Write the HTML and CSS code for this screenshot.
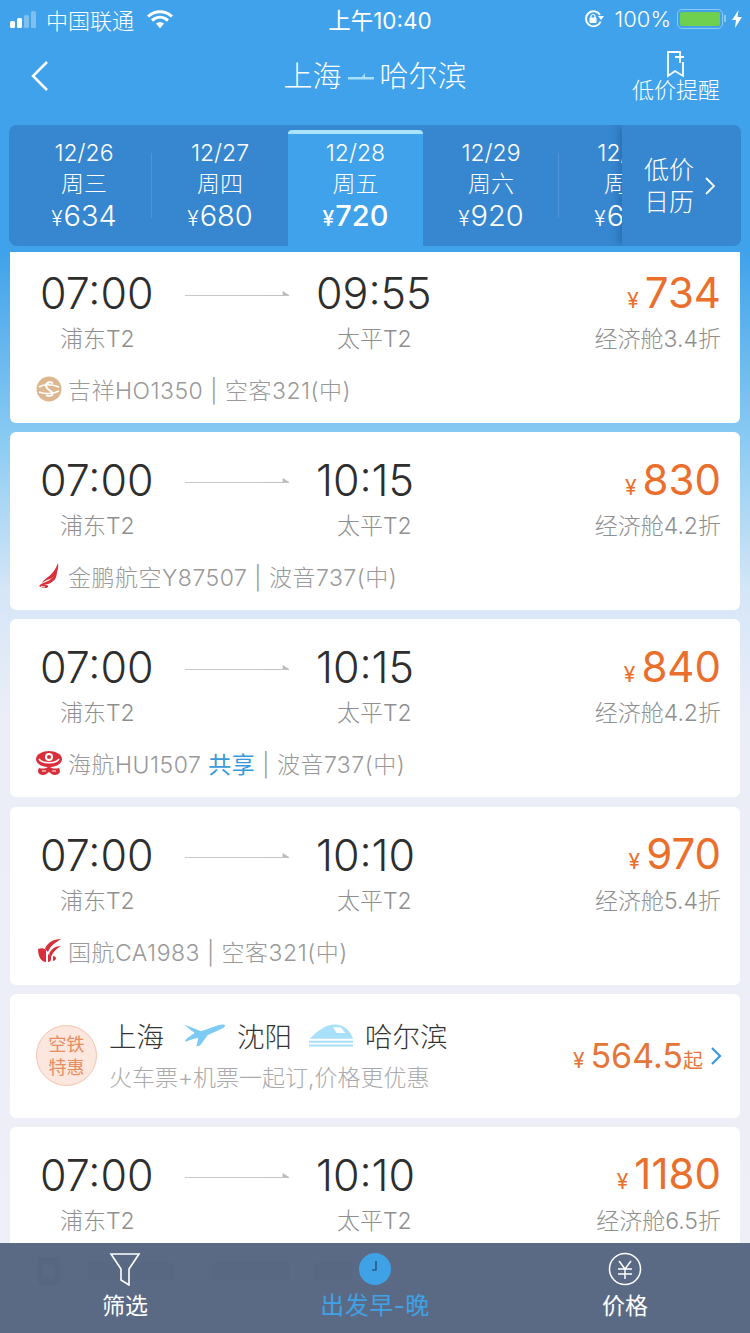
FILE: index.html
```html
<!DOCTYPE html>
<html lang="zh">
<head>
<meta charset="utf-8">
<title>上海-哈尔滨</title>
<link rel="stylesheet" href="styles.css">
</head>
<body>
<div class="page">
  <div class="status">
    <div class="st-left">
      <svg class="signal" width="30" height="18" viewBox="0 0 30 18"><rect x="0" y="11" width="5" height="7" rx="1.5" fill="#fff"/><rect x="7" y="8" width="5" height="10" rx="1.5" fill="#fff"/><rect x="14" y="5" width="5" height="13" rx="1.5" fill="#7fc0f0"/><rect x="21" y="1" width="5" height="17" rx="1.5" fill="#7fc0f0"/></svg>
      <span>中国联通</span>
      <svg class="wifi" width="28" height="20" viewBox="0 0 28 20"><path d="M2 7.5C9 1 19 1 26 7.5M6 11.5c5-4.3 11-4.300 16 0" fill="none" stroke="#fff" stroke-width="3"/><path d="M10 14.500c2.500-2 5.500-2 8 0L14 19.500z" fill="#fff"/></svg>
    </div>
    <div class="st-time">上午10:40</div>
    <div class="st-right">
      <svg width="22" height="20" viewBox="0 0 22 20"><path d="M17.500 12.500A7.500 7.500 0 1 1 17 6" fill="none" stroke="#fff" stroke-width="1.800"/><path d="M15 7h6l-3 4z" fill="#fff"/><rect x="6.500" y="8.500" width="7" height="5.500" rx="1" fill="#fff"/><path d="M8 9V7.500a2 2 0 0 1 4 0V9" fill="none" stroke="#fff" stroke-width="1.200"/></svg>
      <span>100%</span>
      <div class="battery"><div class="battery-fill"></div></div>
      <div class="battery-tip"></div>
      <svg width="10" height="18" viewBox="0 0 10 18"><path d="M6.500 0 0 10h4l-1 8 7-11H5.500z" fill="#fff"/></svg>
    </div>
  </div>

  <div class="nav">
    <svg class="back" width="20" height="32" viewBox="0 0 20 32"><path d="M17 2 3 16l14 14" fill="none" stroke="#fff" stroke-width="2.500"/></svg>
    <div class="title">
      <span>上海</span>
      <svg width="26" height="10" viewBox="0 0 26 10"><path d="M0 6h26v2.500H0zM14 6l3-4v4z" fill="#a9e0fa"/></svg>
      <span>哈尔滨</span>
    </div>
    <div class="remind">
      <svg width="20" height="28" viewBox="0 0 20 28"><path d="M14 2H2v24l7-5 8 5V12" fill="none" stroke="#fff" stroke-width="1.800"/><path d="M14 1v12M9 7h9" fill="none" stroke="#fff" stroke-width="1.800"/></svg>
      <span>低价提醒</span>
    </div>
  </div>

  <div class="dates">
    <div class="date-scroll">
      <div class="date div"><span>12/26</span><span>周三</span><span class="dprice"><small>¥</small>634</span></div>
      <div class="date"><span>12/27</span><span>周四</span><span class="dprice"><small>¥</small>680</span></div>
      <div class="date on"><span>12/28</span><span>周五</span><span class="dprice"><small>¥</small>720</span></div>
      <div class="date div"><span>12/29</span><span>周六</span><span class="dprice"><small>¥</small>920</span></div>
      <div class="date"><span>12/30</span><span>周日</span><span class="dprice"><small>¥</small>680</span></div>
    </div>
    <div class="calendar">
      <div class="cal-text"><span>低价</span><span>日历</span></div>
      <svg width="12" height="20" viewBox="0 0 12 20"><path d="M2 2l8 8-8 8" fill="none" stroke="#fff" stroke-width="1.800"/></svg>
    </div>
  </div>

  <div class="list">
    <div class="card first">
      <div class="row-times">
        <span class="time">07:00</span>
        <svg class="arrow" width="104" height="8" viewBox="0 0 104 8"><path d="M0 4.500h104l-6-4v3.500" fill="#bbb" stroke="#bbb" stroke-width=".8"/></svg>
        <span class="time arr">09:55</span>
        <span class="price"><small>¥</small>734</span>
      </div>
      <div class="row-sub">
        <span class="term dep">浦东T2</span>
        <span class="term to">太平T2</span>
        <span class="disc">经济舱3.4折</span>
      </div>
      <div class="row-air">
        <svg class="logo" width="26" height="26" viewBox="0 0 26 26"><circle cx="13" cy="13" r="12.500" fill="#dcb78f"/><path d="M3 11c5-3 12-3 20 0M3 16c6 2 14 2 20-1" fill="none" stroke="#fff" stroke-width="1.500"/><path d="M17 7c-5-2-9 1-6 5s7 3 5 7c-1 1-4 1-6 0" fill="none" stroke="#fff" stroke-width="2"/></svg>
        <span>吉祥HO1350 | 空客321(中)</span>
      </div>
    </div>

    <div class="card">
      <div class="row-times">
        <span class="time">07:00</span>
        <svg class="arrow" width="104" height="8" viewBox="0 0 104 8"><path d="M0 4.500h104l-6-4v3.500" fill="#bbb" stroke="#bbb" stroke-width=".8"/></svg>
        <span class="time arr">10:15</span>
        <span class="price"><small>¥</small>830</span>
      </div>
      <div class="row-sub">
        <span class="term dep">浦东T2</span>
        <span class="term to">太平T2</span>
        <span class="disc">经济舱4.2折</span>
      </div>
      <div class="row-air">
        <svg class="logo" width="26" height="26" viewBox="0 0 26 26"><path d="M22 0c1 8-2 13-8 16-3 1-6 2-8 4 1-3 4-4 6-6 4-3 8-8 10-14z" fill="#d8303a"/><path d="M21 8c0 7-3 11-9 13l-4 1c2 0 5 0 4 2-2 2-6 1-9-1 1-2 4-3 7-4 5-2 8-6 11-11z" fill="#d8303a"/><path d="M5 23c1 .8 3 1.200 4 .8" fill="none" stroke="#fff" stroke-width="1"/></svg>
        <span>金鹏航空Y87507 | 波音737(中)</span>
      </div>
    </div>

    <div class="card">
      <div class="row-times">
        <span class="time">07:00</span>
        <svg class="arrow" width="104" height="8" viewBox="0 0 104 8"><path d="M0 4.500h104l-6-4v3.500" fill="#bbb" stroke="#bbb" stroke-width=".8"/></svg>
        <span class="time arr">10:15</span>
        <span class="price"><small>¥</small>840</span>
      </div>
      <div class="row-sub">
        <span class="term dep">浦东T2</span>
        <span class="term to">太平T2</span>
        <span class="disc">经济舱4.2折</span>
      </div>
      <div class="row-air">
        <svg class="logo" width="26" height="26" viewBox="0 0 26 26"><path d="M13 1c6 0 13 3 13 8 0 5-6 8-13 8S0 14 0 9c0-5 7-8 13-8z" fill="#d8303a"/><circle cx="13" cy="7" r="4" fill="#fff"/><circle cx="13" cy="7" r="2" fill="#d8303a"/><path d="M3 9c3 5 17 5 20 0" fill="none" stroke="#fff" stroke-width="1.500"/><path d="M13 16c-3 3-6 3-10 2-2 3-1 7 4 7 3 0 4-2 6-3 2 1 3 3 6 3 5 0 6-4 4-7-4 1-7 1-10-2z" fill="#d8303a"/><path d="M6 21h4M16 21h4" stroke="#fff" stroke-width="1.200"/></svg>
        <span>海航HU1507 <b class="share">共享</b> | 波音737(中)</span>
      </div>
    </div>

    <div class="card">
      <div class="row-times">
        <span class="time">07:00</span>
        <svg class="arrow" width="104" height="8" viewBox="0 0 104 8"><path d="M0 4.500h104l-6-4v3.500" fill="#bbb" stroke="#bbb" stroke-width=".8"/></svg>
        <span class="time arr">10:10</span>
        <span class="price"><small>¥</small>970</span>
      </div>
      <div class="row-sub">
        <span class="term dep">浦东T2</span>
        <span class="term to">太平T2</span>
        <span class="disc">经济舱5.4折</span>
      </div>
      <div class="row-air">
        <svg class="logo" width="26" height="26" viewBox="0 0 26 26"><path d="M2 11c3-1 6-1 8 1v12C5 24 2 18 2 11z" fill="#d8303a"/><path d="M25 1C17 1 11 5 9 11l3 3c2-6 7-9 13-13z" fill="#d8303a"/><path d="M25 8c-6 0-10 3-12 8l2 3c2-5 5-8 10-11z" fill="#d8303a"/><path d="M12 16v8c2 0 3-1 3-3v-3z" fill="#d8303a"/><path d="M17 18c2 0 3 1 3 3-1 1-2 2-3 2z" fill="#d8303a"/></svg>
        <span>国航CA1983 | 空客321(中)</span>
      </div>
    </div>

    <div class="card promo">
      <div class="badge"><span>空铁</span><span>特惠</span></div>
      <div class="promo-main">
        <div class="route">
          <span>上海</span>
          <svg class="plane" width="42" height="24" viewBox="0 0 44 24"><path d="M1 1l18 7 14-5c5-2 11-3 11-1s-4 4-9 6l-9 4-8 11-4 1 2-9-8 2-5 2-1-1 3-3 7-5z" fill="#7dcbf2"/></svg>
          <span>沈阳</span>
          <svg class="train" width="46" height="24" viewBox="0 0 48 24"><path d="M2 16C8 9 18 1 28 1c9 0 16 6 19 15z" fill="#a7e0f8"/><path d="M26 4h8l5 6-9 0z" fill="#fff"/><path d="M1 18h46v2H1zM1 22h46v2H1z" fill="#a7e0f8"/></svg>
          <span>哈尔滨</span>
        </div>
        <div class="promo-sub">火车票+机票一起订,价格更优惠</div>
      </div>
      <div class="promo-price"><small>¥</small>564.5<em>起</em></div>
      <svg class="promo-go" width="12" height="20" viewBox="0 0 12 20"><path d="M2 2l8 8-8 8" fill="none" stroke="#3a9ad9" stroke-width="2.200"/></svg>
    </div>

    <div class="card">
      <div class="row-times">
        <span class="time">07:00</span>
        <svg class="arrow" width="104" height="8" viewBox="0 0 104 8"><path d="M0 4.500h104l-6-4v3.500" fill="#bbb" stroke="#bbb" stroke-width=".8"/></svg>
        <span class="time arr">10:10</span>
        <span class="price"><small>¥</small>1180</span>
      </div>
      <div class="row-sub">
        <span class="term dep">浦东T2</span>
        <span class="term to">太平T2</span>
        <span class="disc">经济舱6.5折</span>
      </div>
      <div class="row-air">
        <svg class="logo" width="26" height="30" viewBox="0 0 26 30"><path d="M2 1h22v28H2zM7 9h12v12H7z" fill="#999" fill-rule="evenodd"/></svg>
        <div class="ghost g1"></div>
        <div class="ghost g2"></div>
        <div class="ghost g3"></div>
      </div>
    </div>
  </div>

  <div class="tabbar">
    <div class="tab">
      <svg width="32" height="34" viewBox="0 0 32 34"><path d="M2 2h28L20 17v16l-8-5V17z" fill="none" stroke="#fff" stroke-width="1.600"/></svg>
      <span>筛选</span>
    </div>
    <div class="tab active">
      <svg width="34" height="34" viewBox="0 0 34 34"><circle cx="17" cy="17" r="16" fill="#3fa2e6"/><path d="M18 9v9h-4" fill="none" stroke="#26405f" stroke-width="1.200"/></svg>
      <span>出发早-晚</span>
    </div>
    <div class="tab">
      <svg width="34" height="34" viewBox="0 0 34 34"><circle cx="17" cy="17" r="15.500" fill="none" stroke="#fff" stroke-width="1.500"/><path d="M11 9l6 8 6-8M10 17h14M10 22h14M17 17v10" fill="none" stroke="#fff" stroke-width="1.500"/></svg>
      <span>价格</span>
    </div>
  </div>
</div>
</body>
</html>
```
FILE: styles.css
```css
* { box-sizing: border-box; }
html, body { margin: 0; padding: 0; }
body { font-family: Inter, "Noto Sans CJK SC", sans-serif; }
.page {
  position: relative;
  width: 750px;
  height: 1333px;
  overflow: hidden;
  background: linear-gradient(180deg, #3fa2ea 0, #3fa2ea 250px, #8acbf3 440px, #d5e6f7 590px, #eceef7 720px, #eeeff7 100%);
  color: #fff;
}
.status {
  height: 37px;
  display: grid;
  grid-template-columns: 1fr auto 1fr;
  align-items: center;
  padding: 0 8px 0 10px;
  font-size: 22px;
  font-weight: 300;
}
.st-left { display: flex; align-items: center; gap: 6px; }
.st-left .wifi { margin-left: 6px; }
.st-time { font-weight: 400; font-size: 22.500px; margin-left: 8px; }
.st-right { display: flex; align-items: center; justify-content: flex-end; gap: 4px; }
.st-right span { margin: 0 2px 0 6px; }
.battery { width: 46px; height: 20px; border: 1.500px solid #8cc9f1; border-radius: 5px; padding: 2px; }
.battery-fill { height: 100%; background: #6fd04f; border-radius: 2px; }
.battery-tip { width: 2px; height: 7px; background: #8cc9f1; margin-left: -3px; margin-right: 2px; }

.nav {
  height: 88px;
  display: grid;
  grid-template-columns: 1fr auto 1fr;
  align-items: center;
  padding: 0 30px;
  position: relative;
}
.back { margin-top: -10px; }
.title { display: flex; align-items: center; gap: 6px; font-size: 29px; font-weight: 300; margin-top: -14px; }
.title svg { margin-top: 4px; }
.remind {
  justify-self: end;
  display: flex;
  flex-direction: column;
  align-items: center;
  font-size: 22px;
  font-weight: 300;
  line-height: 26px;
  margin-top: -10px;
}
.remind svg { margin-bottom: -1px; }

.dates {
  margin: 0 9px;
  height: 121px;
  background: #3786d0;
  border-radius: 8px;
  display: flex;
  overflow: hidden;
}
.date-scroll {
  flex: 1;
  min-width: 0;
  display: flex;
  padding-left: 7px;
  overflow: hidden;
}
.date {
  width: 136px;
  flex: none;
  display: flex;
  flex-direction: column;
  align-items: center;
  padding-top: 13px;
  font-size: 23px;
  font-weight: 300;
  line-height: 31px;
  position: relative;
}
.date.div::after {
  content: "";
  position: absolute;
  top: 28px;
  bottom: 28px;
  right: 0;
  width: 1px;
  background: #4b95d8;
}
.date.on { background: #3fa2ea; border-top: 4px solid #a9e4fb; border-radius: 4px 4px 0 0; margin-top: 5px; padding-top: 4px; width: 135px; }
.date.on .dprice { font-weight: 500; }
.dprice { font-size: 29px; line-height: 34px; margin-top: -1px; }
.dprice small { font-size: 21px; margin-right: 1px; }
.calendar {
  flex: none;
  width: 119px;
  background: #3786d0;
  box-shadow: -6px 0 6px -2px rgba(30, 90, 150, .45);
  display: flex;
  align-items: center;
  gap: 10px;
  padding-left: 22px;
}
.cal-text { display: flex; flex-direction: column; font-size: 25px; font-weight: 300; line-height: 32px; }

.list { margin: 6px 10px 0; display: flex; flex-direction: column; gap: 9.200px; }
.card {
  background: #fff;
  border-radius: 6px;
  height: 178px;
  padding-top: 22px;
  color: #333;
  flex: none;
}
.card.first { height: 171px; padding-top: 15px; border-radius: 0 0 6px 6px; }
.row-times { display: flex; align-items: center; height: 52px; padding: 0 19px 0 30px; }
.time { font-size: 43px; font-weight: 300; line-height: 52px; color: #2e2e2e; width: 113px; white-space: nowrap; }
.arrow { margin: 4px 0 0 32px; }
.time.arr { margin-left: 27px; }
.price { margin-left: auto; margin-top: 7px; font-size: 42px; font-weight: 400; color: #ea6f2c; line-height: 52px; white-space: nowrap; }
.price small { font-size: 21px; margin-right: 6px; font-weight: 400; }
.row-sub { display: flex; height: 36px; align-items: center; padding: 0 19px 0 50px; font-size: 23px; font-weight: 300; color: #8f8f8f; }
.term.dep { width: 277px; }
.disc { margin-left: auto; }
.row-air { display: flex; align-items: center; gap: 6px; margin-top: 17px; padding-left: 26px; height: 34px; font-size: 23px; font-weight: 300; color: #999; letter-spacing: .5px; }
.share { color: #3a9ad9; font-weight: 400; }
.ghost { height: 18px; background: #c4c4c4; flex: none; }
.g1 { width: 86px; margin-left: 20px; }
.g2 { width: 77px; margin-left: 32px; }
.g3 { width: 39px; margin-left: 18px; }

.card.promo { height: 124px; padding: 0 17px 0 26px; display: flex; align-items: center; }
.badge {
  width: 61px;
  height: 61px;
  border-radius: 50%;
  background: #fbe7dd;
  border: 1px solid #f3c4ae;
  color: #e98c62;
  font-size: 18px;
  line-height: 23px;
  display: flex;
  flex-direction: column;
  align-items: center;
  justify-content: center;
  flex: none;
}
.promo-main { margin-left: 12px; margin-top: -1px; }
.route { display: flex; align-items: center; gap: 14px; font-size: 27.500px; font-weight: 300; color: #333; height: 40px; }
.plane { margin: 0 -2px 0 5px; }
.train { margin: 0 -3px 0 2px; }
.promo-sub { font-size: 23px; font-weight: 300; color: #aaa; margin-top: 6px; line-height: 34px; }
.promo-price { margin-left: auto; font-size: 34px; color: #e4763a; white-space: nowrap; }
.promo-price small { font-size: 21px; margin-right: 6px; }
.promo-price em { font-style: normal; font-size: 20px; }
.promo-go { margin-left: 7px; margin-right: 1px; }

.tabbar {
  position: absolute;
  left: 0;
  right: 0;
  bottom: 0;
  height: 90px;
  background: rgba(86, 101, 128, .97);
  display: grid;
  grid-template-columns: repeat(3, 1fr);
  padding-top: 9px;
}
.tab { display: flex; flex-direction: column; align-items: center; font-size: 23px; line-height: 30px; gap: 5px; }
.tab.active { color: #3fa2e6; font-size: 24px; letter-spacing: .5px; }
```
